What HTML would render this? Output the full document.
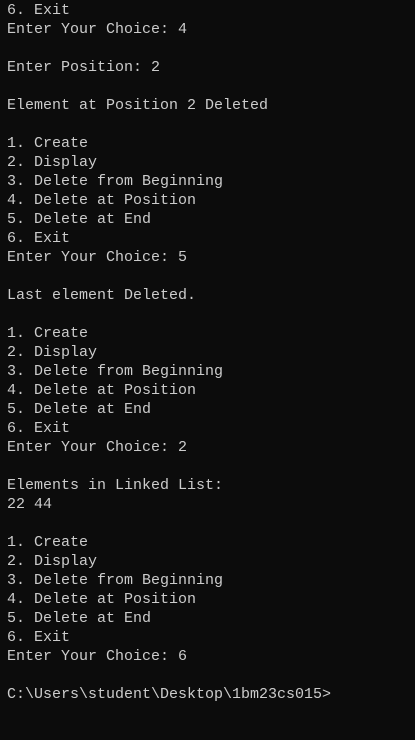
<!DOCTYPE html>
<html><head><style>
html,body{margin:0;padding:0;background:#0c0c0c;width:415px;height:740px;overflow:hidden}
pre{margin:0;padding:1px 0 0 7px;font-family:"Liberation Mono",monospace;font-size:15px;line-height:19px;color:#cccccc}
</style></head><body><pre>6. Exit
Enter Your Choice: 4

Enter Position: 2

Element at Position 2 Deleted

1. Create
2. Display
3. Delete from Beginning
4. Delete at Position
5. Delete at End
6. Exit
Enter Your Choice: 5

Last element Deleted.

1. Create
2. Display
3. Delete from Beginning
4. Delete at Position
5. Delete at End
6. Exit
Enter Your Choice: 2

Elements in Linked List:
22 44

1. Create
2. Display
3. Delete from Beginning
4. Delete at Position
5. Delete at End
6. Exit
Enter Your Choice: 6

C:\Users\student\Desktop\1bm23cs015&gt;</pre></body></html>
